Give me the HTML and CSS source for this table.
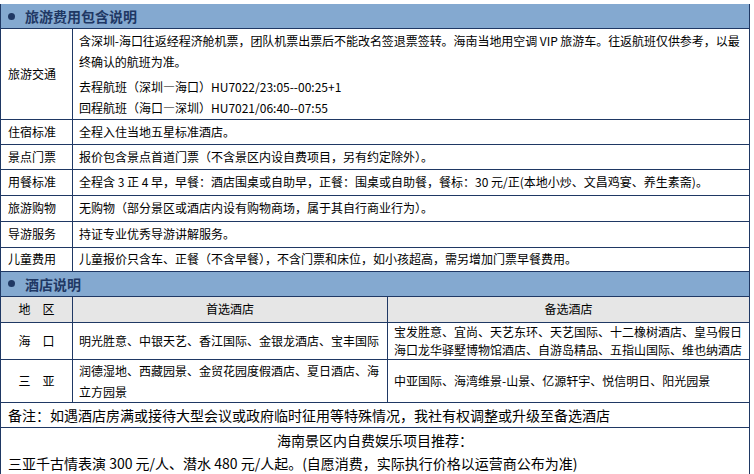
FILE: index.html
```html
<!DOCTYPE html>
<html lang="zh-CN">
<head>
<meta charset="utf-8">
<title>旅游费用包含说明</title>
<link rel="stylesheet" href="styles.css">
</head>
<body>
<div class="doc">
  <div class="sec-head"><span class="dot"></span>旅游费用包含说明</div>
  <table class="info">
    <colgroup><col class="c-label"><col></colgroup>
    <tr class="tall">
      <td class="label">旅游交通</td>
      <td class="content">
        <p class="p-main">含深圳-海口往返经程济舱机票，团队机票出票后不能改名签退票签转。海南当地用空调 VIP 旅游车。往返航班仅供参考，以最<br>终确认的航班为准。</p>
        <p class="p-line">去程航班（深圳—海口）HU7022/23:05--00:25+1</p>
        <p class="p-line">回程航班（海口—深圳）HU7021/06:40--07:55</p>
      </td>
    </tr>
    <tr><td class="label">住宿标准</td><td class="content">全程入住当地五星标准酒店。</td></tr>
    <tr><td class="label">景点门票</td><td class="content">报价包含景点首道门票（不含景区内设自费项目，另有约定除外）。</td></tr>
    <tr class="r26"><td class="label">用餐标准</td><td class="content">全程含 3 正 4 早，早餐：酒店围桌或自助早，正餐：围桌或自助餐，餐标：30 元/正(本地小炒、文昌鸡宴、养生素斋)。</td></tr>
    <tr class="r26"><td class="label">旅游购物</td><td class="content">无购物（部分景区或酒店内设有购物商场，属于其自行商业行为）。</td></tr>
    <tr class="r26"><td class="label">导游服务</td><td class="content">持证专业优秀导游讲解服务。</td></tr>
    <tr class="r24"><td class="label">儿童费用</td><td class="content">儿童报价只含车、正餐（不含早餐），不含门票和床位，如小孩超高，需另增加门票早餐费用。</td></tr>
  </table>
  <div class="sec-head"><span class="dot"></span>酒店说明</div>
  <table class="hotel">
    <colgroup><col class="c-label"><col class="c-first"><col></colgroup>
    <tr class="th-row">
      <td class="center">地&emsp;区</td>
      <td class="center">首选酒店</td>
      <td class="center">备选酒店</td>
    </tr>
    <tr class="h-row1">
      <td class="center">海&emsp;口</td>
      <td class="content">明光胜意、中银天艺、香江国际、金银龙酒店、宝丰国际</td>
      <td class="content">宝发胜意、宜尚、天艺东环、天艺国际、十二橡树酒店、皇马假日<br>海口龙华驿墅博物馆酒店、自游岛精品、五指山国际、维也纳酒店</td>
    </tr>
    <tr class="h-row2">
      <td class="center">三&emsp;亚</td>
      <td class="content wrap">润德湿地、西藏园景、金贸花园度假酒店、夏日酒店、海<br>立方园景</td>
      <td class="content">中亚国际、海湾维景-山景、亿源轩宇、悦信明日、阳光园景</td>
    </tr>
  </table>
  <div class="note">备注：如遇酒店房满或接待大型会议或政府临时征用等特殊情况，我社有权调整或升级至备选酒店</div>
  <div class="extra">
    <p class="extra-title">海南景区内自费娱乐项目推荐：</p>
    <p class="extra-line">三亚千古情表演 300 元/人、潜水 480 元/人起。(自愿消费，实际执行价格以运营商公布为准)</p>
  </div>
  <div class="tail"></div>
</div>
</body>
</html>
```
FILE: styles.css
```css
* { box-sizing: border-box; }
html, body { margin: 0; padding: 0; background: #ffffff; }
body {
  font-family: "Microsoft YaHei", "Noto Sans CJK SC", "Noto Sans", sans-serif;
  color: #000;
  font-size: 12px;
}
p { margin: 0; }
.doc {
  margin-top: 4px;
  width: 750px;
}
.sec-head {
  height: 25px;
  background: #84a9d0;
  border: 1px solid #1f3864;
  border-top: none;
  color: #1f3864;
  font-size: 14px;
  font-weight: bold;
  display: flex;
  align-items: center;
  padding-left: 7px;
}
.dot {
  width: 7px;
  height: 7px;
  border-radius: 50%;
  background: #1f3864;
  margin-right: 10px;
}
table {
  width: 750px;
  border-collapse: collapse;
  table-layout: fixed;
}
td {
  border: 1px solid #1f3864;
  border-top: none;
  padding: 0 7px;
  height: 25px;
  line-height: 18px;
  vertical-align: middle;
}
.c-label { width: 72px; }
.c-first { width: 315px; }
.label { padding-left: 7px; }
.content { padding-left: 6px; }
.tall td { height: 90px; }
.r26 td { height: 26px; }
.r24 td { height: 24px; }
.p-main { line-height: 21px; margin-bottom: 4px; white-space: nowrap; letter-spacing: -0.05px; }
.p-line { line-height: 21px; }
.tall .content { padding-top: 1px; padding-right: 0; }
.center { text-align: center; }
.th-row td { background: #e6e6e6; height: 26px; }
.h-row1 td { height: 37px; }
.h-row2 td { height: 39px; }
.wrap { line-height: 21px; }
.note {
  height: 25px;
  border: 1px solid #1f3864;
  border-top: none;
  font-size: 14px;
  padding-left: 7px;
  display: flex;
  align-items: center;
}
.extra {
  border: 1px solid #1f3864;
  border-top: none;
  font-size: 14px;
  padding: 1px 7px 0;
  height: 47px;
}
.extra-title { text-align: center; line-height: 23px; }
.extra-line { line-height: 23px; }
.tail {
  height: 8px;
  border-left: 1px solid #1f3864;
  border-right: 1px solid #1f3864;
}
```
